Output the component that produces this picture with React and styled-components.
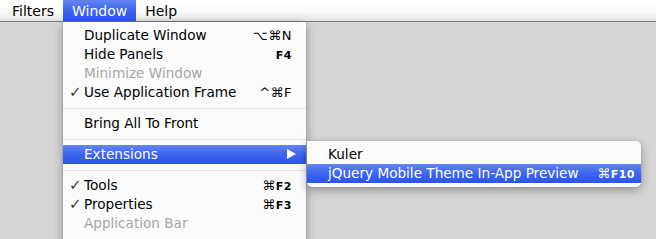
import styled, { createGlobalStyle, css } from 'styled-components';

const GlobalStyle = createGlobalStyle`
  body {
    margin: 0;
    background: #d6d6d6;
    font-family: "DejaVu Sans", "Liberation Sans", sans-serif;
    -webkit-font-smoothing: antialiased;
  }
`;

const blue = css`
  background: linear-gradient(to bottom, #6485f3 0%, #3d65ee 50%, #2a55ea 100%);
  color: #fff;
`;

const Screen = styled.div`
  position: relative;
  width: 656px;
  height: 239px;
  overflow: hidden;
  background: linear-gradient(to bottom, #b4b4b4 0px, #d2d2d2 8px, #d6d6d6 20px);
`;

const MenuBar = styled.div`
  display: flex;
  align-items: stretch;
  height: 21px;
  padding-left: 3px;
  background: linear-gradient(to bottom, #ffffff 0%, #fbfbfb 55%, #e6e6e6 100%);
  border-bottom: 1px solid #7c7c7c;
`;

const MenuTitle = styled.div`
  display: flex;
  align-items: center;
  padding: 0 9px;
  font-size: 14px;
  color: #000;
  ${(p) => p.$open && blue}
`;

const Menu = styled.div`
  position: absolute;
  background: rgba(252, 252, 252, 0.97);
  box-shadow: 0 3px 10px rgba(0, 0, 0, 0.35), 0 0 1px rgba(0, 0, 0, 0.4);
  padding: 4px 0;
  font-size: 13.6px;
`;

const MainMenu = styled(Menu)`
  left: 63px;
  top: 22px;
  width: 243px;
  height: 240px;
`;

const SubMenu = styled(Menu)`
  left: 307px;
  top: 141px;
  width: 334px;
  border-radius: 0 5px 5px 5px;
`;

const Item = styled.div`
  display: flex;
  align-items: center;
  height: 19px;
  padding: 0 ${(p) => p.$right}px 1px 21px;
  box-sizing: border-box;
  color: ${(p) => (p.$disabled ? '#a6a6a6' : '#000')};
  position: relative;
  ${(p) => p.$active && blue}
`;

const Check = styled.span`
  position: absolute;
  left: 6px;
  font-size: 15px;
  color: #3a3a3a;
`;

const Label = styled.span`
  flex: 1;
`;

const Shortcut = styled.span`
  font-size: 13px;
  letter-spacing: 0.5px;
  b {
    font-size: 11px;
    font-weight: bold;
  }
`;

const Arrow = styled.span`
  width: 0;
  height: 0;
  border-top: 5px solid transparent;
  border-bottom: 5px solid transparent;
  border-left: 9px solid #fff;
  margin-right: -4px;
`;

const Separator = styled.div`
  height: 12px;
  display: flex;
  align-items: center;
  &::after {
    content: '';
    flex: 1;
    height: 1px;
    background: #e2e2e2;
  }
`;

const main = [
  { label: 'Duplicate Window', keys: '⌥⌘N' },
  { label: 'Hide Panels', fkey: 'F4' },
  { label: 'Minimize Window', disabled: true },
  { label: 'Use Application Frame', keys: '^⌘F', checked: true },
  'sep',
  { label: 'Bring All To Front' },
  'sep',
  { label: 'Extensions', active: true, sub: true },
  'sep',
  { label: 'Tools', keys: '⌘', fkey: 'F2', checked: true },
  { label: 'Properties', keys: '⌘', fkey: 'F3', checked: true },
  { label: 'Application Bar', disabled: true },
  'sep',
];

function MenuItem({ item, right }) {
  return (
    <Item $active={item.active} $disabled={item.disabled} $right={right}>
      {item.checked && <Check>✓</Check>}
      <Label>{item.label}</Label>
      {(item.keys || item.fkey) && (
        <Shortcut>
          {item.keys}
          {item.fkey && <b>{item.fkey}</b>}
        </Shortcut>
      )}
      {item.sub && <Arrow />}
    </Item>
  );
}

export default function App() {
  return (
    <>
      <GlobalStyle />
      <Screen>
        <MenuBar>
          <MenuTitle>Filters</MenuTitle>
          <MenuTitle $open>Window</MenuTitle>
          <MenuTitle>Help</MenuTitle>
        </MenuBar>
        <MainMenu>
          {main.map((item, i) =>
            item === 'sep' ? (
              <Separator key={i} />
            ) : (
              <MenuItem key={i} item={item} right={14} />
            )
          )}
        </MainMenu>
        <SubMenu>
          <MenuItem item={{ label: 'Kuler' }} right={6} />
          <MenuItem
            item={{ label: 'jQuery Mobile Theme In-App Preview', keys: '⌘', fkey: 'F10', active: true }}
            right={6}
          />
        </SubMenu>
      </Screen>
    </>
  );
}
